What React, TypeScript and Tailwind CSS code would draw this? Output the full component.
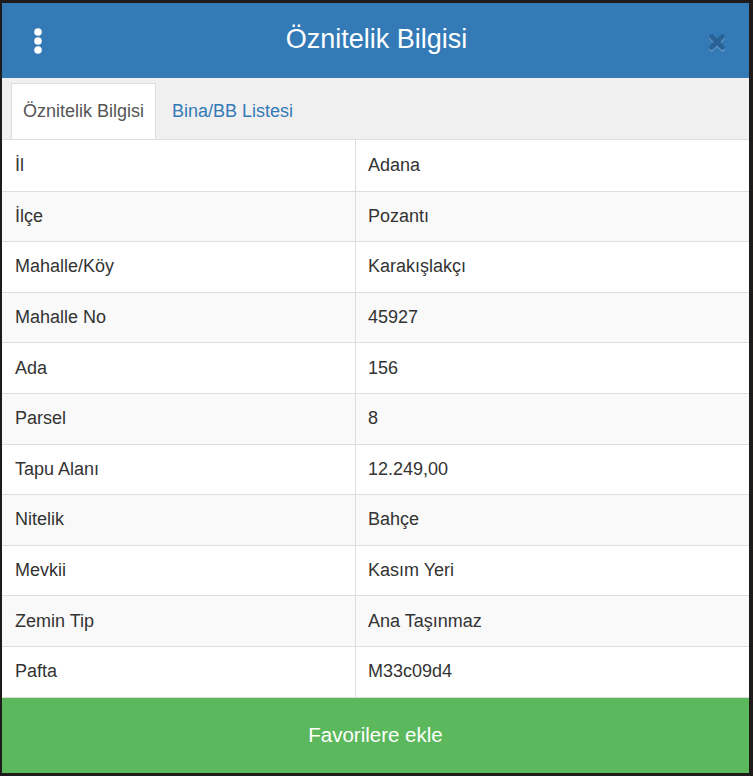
const rows: [string, string][] = [
  ["İl", "Adana"],
  ["İlçe", "Pozantı"],
  ["Mahalle/Köy", "Karakışlakçı"],
  ["Mahalle No", "45927"],
  ["Ada", "156"],
  ["Parsel", "8"],
  ["Tapu Alanı", "12.249,00"],
  ["Nitelik", "Bahçe"],
  ["Mevkii", "Kasım Yeri"],
  ["Zemin Tip", "Ana Taşınmaz"],
  ["Pafta", "M33c09d4"],
];

export default function App() {
  return (
    <div
      className="w-[753px] h-[776px] bg-[#1d1c1a] pt-[3px] pl-[2px]"
      style={{ fontFamily: '"Liberation Sans", Arial, sans-serif' }}
    >
      <div className="w-[747px] h-[770px] flex flex-col bg-white overflow-hidden">
        {/* header */}
        <div className="h-[75px] bg-[#337ab7] grid grid-cols-[1fr_auto_1fr] items-center shrink-0">
          <div className="pl-[29px] flex items-center">
            <svg width="14" height="30" viewBox="0 0 14 30">
              <circle cx="7" cy="6" r="3.8" fill="#fff" />
              <circle cx="7" cy="15" r="3.8" fill="#fff" />
              <circle cx="7" cy="24" r="3.8" fill="#fff" />
            </svg>
          </div>
          <h1 className="text-white text-[27px] leading-none font-normal mt-[-2px] ml-[2px]">Öznitelik Bilgisi</h1>
          <div className="flex justify-end pr-[22px]">
            <svg width="20" height="20" viewBox="0 0 20 20" className="mt-[2px]">
              <path d="M4.5 5 L15.5 16 M15.5 5 L4.5 16" stroke="#8db3d8" strokeWidth="4.6" strokeLinecap="round" transform="translate(0 1.2)" opacity="0.55" />
              <path d="M4.5 4.5 L15.5 15.5 M15.5 4.5 L4.5 15.5" stroke="#2a6296" strokeWidth="4.6" strokeLinecap="round" />
            </svg>
          </div>
        </div>

        {/* tabs */}
        <div className="h-[62px] bg-[#f0f0f0] pt-[5px] pl-[9px] flex items-end shrink-0 border-b border-[#dddddd]">
          <div className="h-[56px] bg-white border border-b-0 border-[#dddddd] px-[11px] flex items-center text-[18px] text-[#555555]">
            Öznitelik Bilgisi
          </div>
          <div className="h-[56px] ml-[2px] px-[14px] flex items-center text-[18px] text-[#337ab7]">
            Bina/BB Listesi
          </div>
        </div>

        {/* table */}
        <div className="flex flex-col shrink-0">
          {rows.map(([k, v], i) => (
            <div
              key={k}
              className={`flex h-[50.6px] text-[18px] text-[#333333] ${i > 0 ? "border-t border-[#dddddd]" : ""} ${
                i % 2 === 1 ? "bg-[#f9f9f9]" : "bg-white"
              }`}
            >
              <div className="w-[354px] pl-[13px] flex items-center border-r border-[#dddddd]">{k}</div>
              <div className="flex-1 pl-[12px] flex items-center">{v}</div>
            </div>
          ))}
        </div>

        {/* button */}
        <button className="flex-1 bg-[#5cb85c] border-t border-[#dddddd] text-white text-[20.5px] flex items-center justify-center">
          Favorilere ekle
        </button>
      </div>
    </div>
  );
}
